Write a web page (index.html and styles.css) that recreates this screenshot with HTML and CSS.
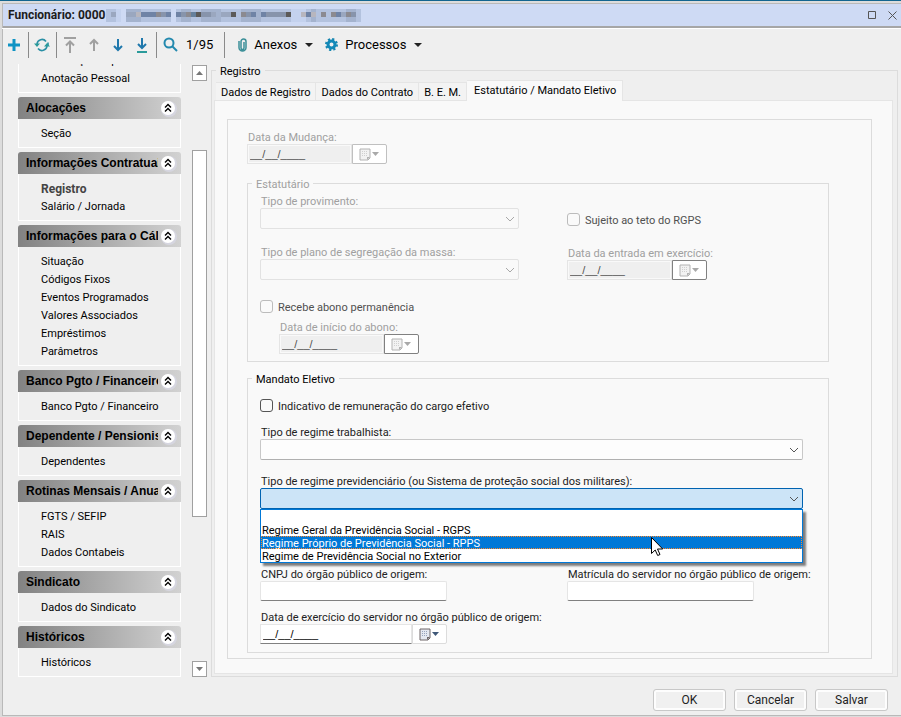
FILE: index.html
```
<!DOCTYPE html>
<html lang="pt-BR">
<head>
  <meta charset="UTF-8">
  <title>Funcionário</title>
  <meta name="viewport" content="width=device-width, initial-scale=1.0">
  <link rel="stylesheet" href="styles.css">
</head>
<body>
  <!-- Shared icons -->
  <svg class="sprite" aria-hidden="true">
    <symbol id="collapse" viewBox="0 0 17 17">
      <circle cx="9" cy="9" r="8" fill="#d6d6e0"/>
      <circle cx="8" cy="8" r="7" fill="#fff"/>
      <path d="M5 7.5 8 4.500l3 3M5 11.500l3-3 3 3" fill="none" stroke="#000" stroke-width="1.400"/>
    </symbol>
    <symbol id="chevron" viewBox="0 0 10 6">
      <path d="M1 1l4 4 4-4" fill="none" stroke="currentColor"/>
    </symbol>
    <symbol id="calendar" viewBox="0 0 21 13">
      <path d="M1 1h10v9l-2 2H1z" fill="#e4e7f0" stroke="#6e6668"/>
      <path d="M3 3h1v1H3zM5 3h1v1H5zM7 3h1v1H7zM3 5h1v1H3zM5 5h1v1H5zM7 5h1v1H7zM3 7h1v1H3zM5 7h1v1H5zM7 7h1v1H7z" fill="#97a3bd"/>
      <path d="M8 12V9h3z" fill="#6e6668"/>
      <path d="M13 4h7l-3.500 4z" fill="#3f5878"/>
    </symbol>
    <symbol id="caret" viewBox="0 0 8 4"><path d="M0 0h8L4 4z" fill="#222"/></symbol>
  </svg>

  <div class="window">
    <!-- Title bar -->
    <header class="titlebar">
      <h1>Funcionário: 0000</h1>
      <svg class="mask" width="255" height="13" shape-rendering="crispEdges" aria-hidden="true">
        <path d="M0 0h10v13H0zM20 0h45v13H20zM70 0h115v13H70zM200 0h55v13h-55z" fill="#b3c2de"/>
        <path d="M10 0h5v13h-5zM185 0h15v13h-15z" fill="#c4d2ee"/>
        <path d="M20 0h15v13H20zM75 0h10v13H75zM95 0h20v13H95zM135 0h20v13h-20zM205 0h5v13h-5zM240 0h10v13h-10z" fill="#a4b3ce"/>
        <path d="M5 3h5v5H5zM20 3h10v5H20zM105 3h5v5h-5zM115 3h10v5h-10zM235 3h5v5h-5z" fill="#9aa7bf"/>
        <path d="M30 3h5v5h-5zM195 3h5v5h-5zM205 3h5v5h-5z" fill="#b7b6be"/>
        <path d="M35 3h15v5H35zM60 3h5v5h-5zM70 3h5v5h-5zM145 3h5v5h-5zM155 3h5v5h-5zM200 3h5v5h-5zM230 3h5v5h-5z" fill="#6f83a5"/>
        <path d="M55 3h5v5h-5zM75 3h5v5h-5zM95 3h10v5H95zM140 3h5v5h-5zM160 3h20v5h-20zM245 3h5v5h-5z" fill="#8794ab"/>
        <path d="M50 3h5v5h-5zM80 3h5v5h-5zM135 3h5v5h-5zM215 3h5v5h-5zM225 3h5v5h-5zM240 3h5v5h-5z" fill="#8b8a90"/>
        <path d="M85 3h5v5h-5z" fill="#66809c"/>
        <path d="M90 3h5v5h-5zM125 3h5v5h-5zM180 3h5v5h-5z" fill="#5c5a58"/>
      </svg>
      <div class="window-buttons">
        <button type="button" aria-label="Maximizar"><svg width="9" height="9"><path d="M.5.5h7v7h-7z" fill="none" stroke="#555"/></svg></button>
        <button type="button" aria-label="Fechar"><svg width="9" height="9"><path d="M.5.5l8 8M8.500.500l-8 8" fill="none" stroke="#555"/></svg></button>
      </div>
    </header>

    <!-- Toolbar -->
    <div class="toolbar">
      <button type="button" aria-label="Novo"><svg width="12" height="12"><path d="M6 0v12M0 6h12" stroke="#0f93c4" stroke-width="3"/></svg></button>
      <span class="sep"></span>
      <button type="button" aria-label="Atualizar"><svg width="16" height="14" fill="none" stroke-width="1.600">
        <path d="M3 6a5 5 0 0 1 9-2.500M14 4.500v3" stroke="#2a8fa5"/>
        <path d="M13 8a5 5 0 0 1-9 2.500" stroke="#2a8fa5"/>
        <path d="M0 5.500h6L3 9zM16 8.500h-6L13 5z" fill="#2a9a9a" stroke="none"/></svg></button>
      <span class="sep"></span>
      <button type="button" aria-label="Primeiro" disabled><svg width="12" height="16" fill="none" stroke="#a0a0a0" stroke-width="2"><path d="M0 1h12M6 4v12M2 8.500l4-4 4 4"/></svg></button>
      <button type="button" aria-label="Anterior" disabled><svg width="12" height="14" fill="none" stroke="#a0a0a0" stroke-width="2"><path d="M6 2v11M2 6l4-4 4 4"/></svg></button>
      <button type="button" aria-label="Próximo"><svg width="12" height="14" fill="none" stroke="#1f78ac" stroke-width="2"><path d="M6 1v11M2 8l4 4 4-4"/></svg></button>
      <button type="button" aria-label="Último"><svg width="12" height="16" fill="none" stroke-width="2"><path d="M6 1v10M2 7l4 4 4-4" stroke="#1f78ac"/><path d="M1 15h10" stroke="#2a9a9a"/></svg></button>
      <span class="sep"></span>
      <button type="button" aria-label="Pesquisar"><svg width="15" height="15" fill="none" stroke="#2389ae" stroke-width="2"><circle cx="6" cy="6" r="4.500"/><path d="M9.500 9.500L14 14"/></svg></button>
      <span class="counter">1/95</span>
      <span class="sep"></span>
      <button type="button" class="menu">
        <svg width="9" height="14" fill="none" stroke="#3b8f98" stroke-width="1.500"><path d="M6 4v6a1.500 1.500 0 0 1-3 0V3.500a2.500 2.500 0 0 1 5 0v6a3.500 3.500 0 0 1-7 0V3"/></svg>
        <span>Anexos</span>
        <svg width="8" height="4"><use href="#caret"/></svg>
      </button>
      <button type="button" class="menu">
        <svg width="13" height="13" fill="none"><circle cx="6.500" cy="6.500" r="5" stroke="#1786b0" stroke-width="3" stroke-dasharray="2 1.927"/><circle cx="6.500" cy="6.500" r="3.500" stroke="#1389b8" stroke-width="3"/></svg>
        <span>Processos</span>
        <svg width="8" height="4"><use href="#caret"/></svg>
      </button>
    </div>

    <div class="main">
      <!-- Side menu -->
      <nav class="sidebar">
        <div class="group first">
          <ul>
            <li><a href="#">Habilitação Especial</a></li>
            <li><a href="#">Anotação Pessoal</a></li>
          </ul>
        </div>
        <div class="group">
          <h2><span>Alocações</span><svg><use href="#collapse"/></svg></h2>
          <ul>
            <li><a href="#">Seção</a></li>
          </ul>
        </div>
        <div class="group">
          <h2><span>Informações Contratuais</span><svg><use href="#collapse"/></svg></h2>
          <ul>
            <li><a href="#" class="active">Registro</a></li>
            <li><a href="#">Salário / Jornada</a></li>
          </ul>
        </div>
        <div class="group">
          <h2><span>Informações para o Cálculo</span><svg><use href="#collapse"/></svg></h2>
          <ul>
            <li><a href="#">Situação</a></li>
            <li><a href="#">Códigos Fixos</a></li>
            <li><a href="#">Eventos Programados</a></li>
            <li><a href="#">Valores Associados</a></li>
            <li><a href="#">Empréstimos</a></li>
            <li><a href="#">Parâmetros</a></li>
          </ul>
        </div>
        <div class="group">
          <h2><span>Banco Pgto / Financeiro</span><svg><use href="#collapse"/></svg></h2>
          <ul>
            <li><a href="#">Banco Pgto / Financeiro</a></li>
          </ul>
        </div>
        <div class="group">
          <h2><span>Dependente / Pensionista</span><svg><use href="#collapse"/></svg></h2>
          <ul>
            <li><a href="#">Dependentes</a></li>
          </ul>
        </div>
        <div class="group">
          <h2><span>Rotinas Mensais / Anuais</span><svg><use href="#collapse"/></svg></h2>
          <ul>
            <li><a href="#">FGTS / SEFIP</a></li>
            <li><a href="#">RAIS</a></li>
            <li><a href="#">Dados Contabeis</a></li>
          </ul>
        </div>
        <div class="group">
          <h2><span>Sindicato</span><svg><use href="#collapse"/></svg></h2>
          <ul>
            <li><a href="#">Dados do Sindicato</a></li>
          </ul>
        </div>
        <div class="group">
          <h2><span>Históricos</span><svg><use href="#collapse"/></svg></h2>
          <ul>
            <li><a href="#">Históricos</a></li>
          </ul>
        </div>
      </nav>

      <div class="scrollbar">
        <button type="button" aria-label="Subir"><svg width="7" height="4"><path d="M0 4h7L3.500 0z" fill="#777"/></svg></button>
        <div class="track"><div class="thumb"></div></div>
        <button type="button" aria-label="Descer"><svg width="7" height="4"><path d="M0 0h7L3.500 4z" fill="#777"/></svg></button>
      </div>

      <!-- Record form -->
      <fieldset class="record">
        <legend>Registro</legend>
        <div class="tabs" role="tablist">
          <button type="button" role="tab">Dados de Registro</button>
          <button type="button" role="tab">Dados do Contrato</button>
          <button type="button" role="tab">B. E. M.</button>
          <button type="button" role="tab" class="active" aria-selected="true">Estatutário / Mandato Eletivo</button>
        </div>
        <div class="page">
          <div class="panel">
            <div class="field disabled">
              <label for="mudanca">Data da Mudança:</label>
              <div class="date soft">
                <input type="text" id="mudanca" value="__/__/____" disabled>
                <button type="button" aria-label="Calendário" disabled><svg><use href="#calendar"/></svg></button>
              </div>
            </div>

            <fieldset class="box">
              <legend class="off">Estatutário</legend>
              <div class="columns estatutario">
                <div class="left">
                  <div class="field disabled">
                    <label for="provimento">Tipo de provimento:</label>
                    <div class="combo short">
                      <select id="provimento" disabled><option></option></select>
                      <svg><use href="#chevron"/></svg>
                    </div>
                  </div>
                  <div class="field disabled">
                    <label for="plano">Tipo de plano de segregação da massa:</label>
                    <div class="combo short">
                      <select id="plano" disabled><option></option></select>
                      <svg><use href="#chevron"/></svg>
                    </div>
                  </div>
                  <div class="abono">
                    <div class="check disabled">
                      <input type="checkbox" id="abono" disabled>
                      <label for="abono">Recebe abono permanência</label>
                    </div>
                    <div class="field disabled indent">
                      <label for="inicio">Data de início do abono:</label>
                      <div class="date">
                        <input type="text" id="inicio" value="__/__/____" disabled>
                        <button type="button" aria-label="Calendário" disabled><svg><use href="#calendar"/></svg></button>
                      </div>
                    </div>
                  </div>
                </div>
                <div class="right">
                  <div class="check disabled">
                    <input type="checkbox" id="teto" disabled>
                    <label for="teto">Sujeito ao teto do RGPS</label>
                  </div>
                  <div class="field disabled">
                    <label for="entrada">Data da entrada em exercício:</label>
                    <div class="date">
                      <input type="text" id="entrada" value="__/__/____" disabled>
                      <button type="button" aria-label="Calendário" disabled><svg><use href="#calendar"/></svg></button>
                    </div>
                  </div>
                </div>
              </div>
            </fieldset>

            <fieldset class="box mandato">
              <legend>Mandato Eletivo</legend>
              <div class="check">
                <input type="checkbox" id="cargo">
                <label for="cargo">Indicativo de remuneração do cargo efetivo</label>
              </div>
              <div class="field">
                <label for="trabalhista">Tipo de regime trabalhista:</label>
                <div class="combo">
                  <select id="trabalhista"><option></option></select>
                  <svg><use href="#chevron"/></svg>
                </div>
              </div>
              <div class="field">
                <label for="previdenciario">Tipo de regime previdenciário (ou Sistema de proteção social dos militares):</label>
                <div class="combo open">
                  <select id="previdenciario"><option></option></select>
                  <svg><use href="#chevron"/></svg>
                  <ul class="options">
                    <li></li>
                    <li>Regime Geral da Previdência Social - RGPS</li>
                    <li class="selected">Regime Próprio de Previdência Social - RPPS
                      <svg class="cursor" width="13" height="20"><path d="M.5.5v16l3.700-3.500 2.500 5.500 2.300-1-2.500-5.500h5.200z" fill="#fff" stroke="#000"/></svg>
                    </li>
                    <li>Regime de Previdência Social no Exterior</li>
                  </ul>
                </div>
              </div>
              <div class="columns origem">
                <div class="field">
                  <label for="cnpj">CNPJ do órgão público de origem:</label>
                  <input type="text" id="cnpj" class="text">
                </div>
                <div class="field">
                  <label for="matricula">Matrícula do servidor no órgão público de origem:</label>
                  <input type="text" id="matricula" class="text">
                </div>
              </div>
              <div class="field">
                <label for="exercicio">Data de exercício do servidor no órgão público de origem:</label>
                <div class="date wide">
                  <input type="text" id="exercicio" value="__/__/____">
                  <button type="button" aria-label="Calendário"><svg><use href="#calendar"/></svg></button>
                </div>
              </div>
            </fieldset>
          </div>
        </div>
      </fieldset>
    </div>

    <!-- Footer buttons -->
    <footer class="actions">
      <button type="button">OK</button>
      <button type="button">Cancelar</button>
      <button type="button">Salvar</button>
    </footer>
  </div>
</body>
</html>
```
FILE: styles.css
```
/* ====== RESET ====== */
* {
  margin: 0;
  padding: 0;
  box-sizing: border-box;
}
ul {
  list-style: none;
}
button,
input,
select {
  font: inherit;
  color: inherit;
}
.sprite {
  display: none;
}

/* ====== BODY & WINDOW ====== */
body {
  font-family: Roboto, "Liberation Sans", sans-serif;
  font-size: 11px;
  line-height: 14px;
  color: #000;
  background-color: #dcdcdc;
  border-top: 1px solid #12658f;
  min-height: 100vh;
  padding: 2px 0 1px 2px;
  overflow: hidden;
}
.window {
  background-color: #efefef;
  border: 1px solid #b9b9b9;
  border-right: none;
}

/* ====== TITLE BAR ====== */
.titlebar {
  display: flex;
  align-items: center;
  height: 24px;
  padding: 0 4px 0 5px;
  background-color: #cedaf4;
  border-bottom: 2px solid #a6a6a6;
}
.titlebar h1 {
  font-size: 12px;
  line-height: 14px;
  color: #1c1c1c;
}
.window-buttons {
  display: flex;
  gap: 11px;
  margin-left: auto;
}
.window-buttons button {
  display: flex;
  background: none;
  border: none;
}

/* ====== TOOLBAR ====== */
.toolbar {
  display: flex;
  align-items: center;
  height: 36px;
  margin-left: -1px;
  padding-bottom: 4px;
  border-top: 1px solid #fff;
  font-size: 13px;
}
.toolbar button {
  display: flex;
  align-items: center;
  justify-content: center;
  width: 24px;
  height: 26px;
  background: none;
  border: none;
}
.toolbar .sep {
  width: 1px;
  height: 26px;
  margin: 0 1px 0 2px;
  background-color: #8a8a8a;
}
.toolbar .counter {
  margin: 0 9px 0 4px;
}
.toolbar .menu {
  width: auto;
  gap: 8px;
  padding: 0 0 0 12px;
}
.toolbar .menu span {
  margin-left: -1px;
}

/* ====== SIDE MENU ====== */
.main {
  display: flex;
  padding-right: 3px;
}
.sidebar {
  width: 163px;
  margin-left: 15px;
  overflow: hidden;
}
.group {
  margin-bottom: 4px;
}
.group:last-child {
  margin-bottom: 0;
}
.group.first {
  margin-top: -18px;
}
.group h2 {
  display: flex;
  align-items: center;
  justify-content: space-between;
  height: 22px;
  padding: 0 4px 0 8px;
  font-family: "Liberation Sans", Arial, sans-serif;
  font-size: 12px;
  background: linear-gradient(to right, #828282, #d2d2d2);
  border-radius: 3px 3px 0 0;
}
.group h2 span {
  width: 132px;
  overflow: hidden;
  white-space: nowrap;
}
.group h2 svg {
  width: 17px;
  height: 17px;
}
.group ul {
  padding: 6px 0 4px 22px;
  border: 1px solid #fff;
  border-top: none;
}
.group li {
  line-height: 18px;
  height: 18px;
}
.group a {
  color: #000;
  text-decoration: none;
}
.group a.active {
  font-size: 12px;
  font-weight: bold;
  color: #444;
}

/* ====== SCROLLBAR ====== */
.scrollbar {
  display: flex;
  flex-direction: column;
  width: 15px;
  margin: 1px 4px 0 11px;
}
.scrollbar button {
  display: flex;
  align-items: center;
  justify-content: center;
  height: 16px;
  background-color: #fff;
  border: 1px solid #a0a0a0;
}
.track {
  flex: 1;
  display: flex;
  flex-direction: column;
}
.track::before {
  content: "";
  flex: 12;
}
.track::after {
  content: "";
  flex: 25;
}
.thumb {
  flex: 63;
  background-color: #fff;
  border: 1px solid #a0a0a0;
}

/* ====== RECORD & TABS ====== */
.record {
  flex: 1;
  min-width: 0;
  padding: 3px 4px 2px 2px;
  border: 1px solid #dcdcdc;
}
.record legend {
  margin-left: 2px;
  padding: 2px 4px 0;
  line-height: 11px;
}
.tabs {
  display: flex;
  align-items: flex-end;
  height: 20px;
  padding-left: 2px;
}
.tabs button {
  height: 18px;
  padding: 2px 5px 0;
  background-color: #f3f3f3;
  border: 1px solid #e5e5e5;
  border-left: none;
  border-bottom: none;
  white-space: nowrap;
}
.tabs button.active {
  height: 21px;
  margin-bottom: -1px;
  padding: 0 6px 0 7px;
  background-color: #f9f9f9;
  position: relative;
}
.page {
  padding: 18px 20px 14px 12px;
  background-color: #f9f9f9;
  border: 1px solid #e5e5e5;
}
.panel {
  padding: 10px 42px 5px 19px;
  border: 1px solid #dcdcdc;
}

/* ====== FORM ====== */
.box {
  margin-top: 13px;
  padding: 4px 25px 7px 12px;
  border: 1px solid #dcdcdc;
}
.box legend {
  margin-left: -8px;
}
.box.mandato {
  margin-top: 10px;
  padding: 14px 25px 8px 12px;
}
.off {
  color: #a0a0a0;
}
.columns {
  display: grid;
  grid-template-columns: minmax(0, 13fr) minmax(0, 10fr);
}
.field label {
  display: block;
  padding: 2px 0 0 1px;
  line-height: 12px;
  color: #222;
  white-space: nowrap;
}
.field.disabled label {
  color: #a0a0a0;
}
.left {
  display: flex;
  flex-direction: column;
  gap: 16px;
}
.left .abono {
  margin-top: 4px;
}
.right {
  display: flex;
  flex-direction: column;
  gap: 19px;
  padding-top: 19px;
}
.indent {
  margin: 6px 0 0 19px;
}
.mandato .check {
  margin-bottom: 12px;
}
.mandato .field + .field {
  margin-top: 14px;
}
.mandato .origem {
  margin: 58px 0 9px;
}
.mandato .origem .field {
  margin: 0;
}

/* Check boxes */
.check {
  display: flex;
  align-items: flex-start;
  gap: 5px;
}
.check input {
  appearance: none;
  width: 13px;
  height: 13px;
  background-color: #fafafa;
  border: 1px solid #555;
  border-radius: 3px;
}
.check label {
  padding-top: 2px;
  line-height: 12px;
  color: #222;
}
.check.disabled input {
  border-color: #bcbcbc;
}
.check.disabled label {
  color: #505050;
}

/* Drop-downs */
.combo {
  position: relative;
  height: 21px;
}
.combo.short {
  width: 259px;
}
.combo select {
  appearance: none;
  display: block;
  width: 100%;
  height: 21px;
  background-color: #fdfdfd;
  border: 1px solid #c8c8c8;
  border-bottom-color: #b0b0b0;
  border-radius: 2px;
}
.combo > svg {
  position: absolute;
  right: 4px;
  top: 8px;
  width: 10px;
  height: 6px;
  color: #555;
  pointer-events: none;
}
.disabled .combo select {
  background-color: #f9f9f9;
  border-color: #e2e2e2;
  opacity: 1;
}
.disabled .combo > svg {
  color: #a8a8a8;
}
.combo.open select {
  background-color: #cce4f7;
  border-color: #0063b1;
}
.options {
  position: absolute;
  top: 100%;
  left: 0;
  width: 100%;
  background-color: #fff;
  border: 1px solid #0078d7;
  box-shadow: 3px 3px 2px rgba(0, 0, 0, 0.5);
  z-index: 10;
}
.options li {
  position: relative;
  height: 13px;
  padding: 2px 0 0 1px;
  line-height: 11px;
}
.options li.selected {
  color: #fff;
  background-color: #0078d7;
  outline: 1px dotted #ff8728;
  outline-offset: -1px;
}
.cursor {
  position: absolute;
  left: 72%;
  top: 1px;
}

/* Text and date boxes */
.text {
  display: block;
  width: 187px;
  height: 20px;
  background-color: #fff;
  border: 1px solid #e5e5e5;
  border-bottom-color: #808080;
  border-radius: 2px;
}
.date {
  display: flex;
  width: 140px;
  height: 20px;
}
.date.wide {
  width: 187px;
}
.date input {
  flex: 1;
  min-width: 0;
  padding-left: 2px;
  font-family: "Liberation Sans", Arial, sans-serif;
  background-color: #fff;
  border: 1px solid #e5e5e5;
  border-bottom-color: #808080;
}
.date button {
  display: flex;
  align-items: center;
  justify-content: center;
  width: 35px;
  background-color: #fff;
  border: 1px solid #dcdcdc;
  border-radius: 0 2px 2px 0;
}
.date button svg {
  width: 21px;
  height: 13px;
}
.disabled .date input {
  color: #505050;
  background-color: #efefef;
  border-color: #e5e5e5;
  box-shadow: inset 0 0 0 1px #f9f9f9;
}
.disabled .date button {
  border-color: #808080;
}
.disabled .date.soft button {
  border-color: #c0c0c0;
}
.disabled .date button svg {
  opacity: 0.5;
  filter: grayscale(1);
}

/* ====== FOOTER ====== */
.actions {
  display: flex;
  justify-content: flex-end;
  gap: 8px;
  padding: 12px 13px 4px;
}
.actions button {
  width: 73px;
  height: 22px;
  font-size: 12px;
  color: #222;
  background-color: #f0f0f0;
  border: 1px solid #c8c8c8;
  border-radius: 3px;
  box-shadow: inset 0 0 0 2px #fdfdfd;
}
```
